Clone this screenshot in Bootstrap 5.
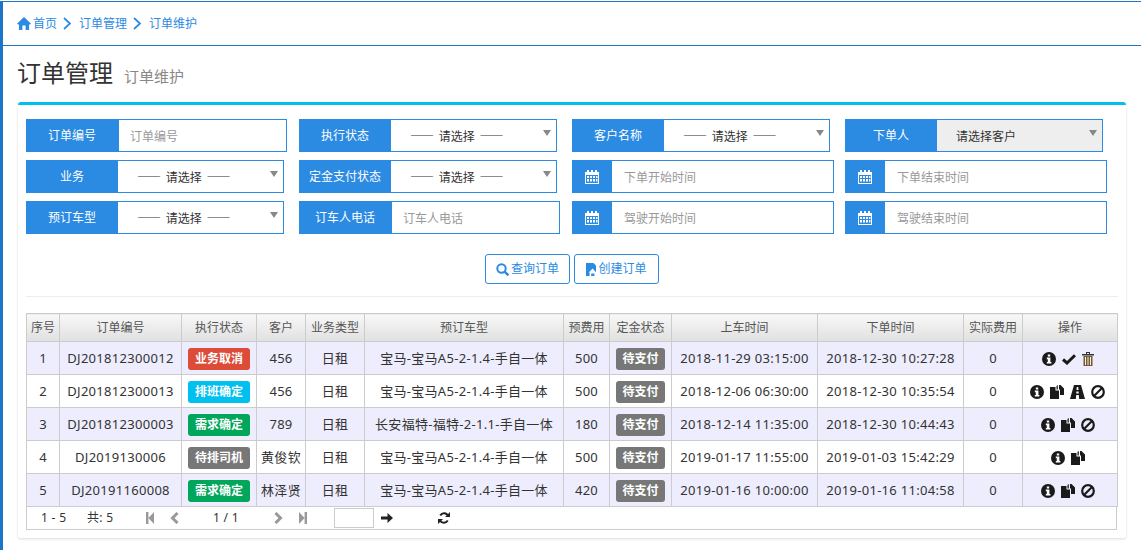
<!DOCTYPE html>
<html lang="zh">
<head>
<meta charset="utf-8">
<title>订单维护</title>
<link href="https://cdn.jsdelivr.net/npm/bootstrap@5.3.0/dist/css/bootstrap.min.css" rel="stylesheet">
<style>
html,body{height:550px;overflow:hidden}
body{font-family:"Noto Sans","Noto Sans CJK SC",sans-serif;font-size:13px;color:#333;background:#fff}
.page-wrap{height:550px;border-left:3px solid #1c75c9;border-top:1px solid #2176c7;margin-top:1px;overflow:hidden}
.crumb-bar{height:44px;border-bottom:1px solid #2176c7;padding-left:14px;display:flex;align-items:center}
.crumb-bar .breadcrumb{margin:0;font-size:12px;align-items:center;--bs-breadcrumb-item-padding-x:0;--bs-breadcrumb-divider:""}
.crumb-bar .breadcrumb-item+.breadcrumb-item::before{display:none}
.crumb-bar .breadcrumb-item{display:flex;align-items:center;color:#2b8ae2}
.crumb-bar svg{color:#2b8ae2;display:block}
.home-ic{margin-right:2px}
.chev{margin:0 8px 0 6px}
.title-line{height:56px;padding:9px 0 0 15px;display:flex;align-items:baseline}
.title-line h1{font-size:24px;font-weight:400;margin:0;color:#333;line-height:36px;margin-left:-1px}
.title-line small{font-size:15px;color:#888;margin-left:11px}
.main-box{margin:0 15px;height:436px;border-top:3px solid #00c0ef;border-radius:3px;box-shadow:0 1px 3px rgba(0,0,0,.14);padding:14px 8px 0;background:#fff}
.filter-grid{row-gap:8px;--bs-gutter-x:0}
.fld{height:33px;flex-wrap:nowrap;border:1px solid #2b8ae2;width:258px}
.fld.w-a{width:261px}
.fld.w-b{width:262px}
.fld .input-group-text{background:#2b8ae2;color:#fff;border:0;border-radius:0;width:92px;justify-content:center;font-size:12px;padding:1px 2px 0 0;flex:none}
.fld .lbl-cal{width:39px;padding:0 2px 0 0}
.fld .form-control,.fld .form-select{border:0;border-radius:0;height:31px;font-size:12px;padding:2px 12px 0;box-shadow:none;margin:0!important;color:#333;min-height:0}
.fld.w-a .form-control{padding-left:11px}
.fld .form-control::placeholder{color:#999}
.fld .form-select{padding:0 18px 0 19px;background-image:none;background-color:#fff;text-align:left;word-spacing:2px;font-family:"Noto Sans CJK SC","Noto Sans",sans-serif}
.fld.off .form-select{background-color:#eee;color:#333}
.sel-wrap{position:relative;flex:1 1 auto;min-width:0}
.sel-wrap::after{content:"";position:absolute;right:5px;top:10px;border:4px solid transparent;border-top:6px solid #888;border-bottom:0;pointer-events:none}
.act-line{margin-top:20px;height:43px;border-bottom:1px solid #eee;display:flex;justify-content:center;gap:4px;align-items:flex-start}
.btn-out{height:30px;width:85px;padding:0;border:1px solid #2b8ae2;border-radius:3px;color:#2b8ae2;background:#fff;font-size:12px;display:flex;align-items:center;justify-content:center;gap:2px}
.order-tbl{table-layout:fixed;width:1091px;margin:16px 0 0;border-collapse:collapse;--bs-table-bg:transparent}
.order-tbl th,.order-tbl td{border:1px solid #ccc;padding:0;text-align:center;vertical-align:middle;white-space:nowrap;font-weight:400;overflow:hidden}
.order-tbl th{height:28px;font-size:12px;color:#555;background:linear-gradient(#f8f8f8,#e0e0e0);padding-top:1px}
.order-tbl td{height:33px;font-size:13px;color:#333;letter-spacing:.3px;padding-top:2px}
.order-tbl tbody tr:nth-child(odd) td{background:#eeedfd}
.tag{display:inline-block;font-size:12px;font-weight:700;color:#fff;border-radius:3px;height:22px;line-height:22px;padding:0;width:62px;vertical-align:middle;letter-spacing:0}
.tag-s{width:49px}
.tag-red{background:#dd4b39}.tag-cyan{background:#00c0ef}.tag-green{background:#00a65a}.tag-grey{background:#777}
.ops{display:flex;justify-content:center;align-items:center;gap:6px;color:#1a1a1a;padding-right:5px}
.ops svg{display:block}
.pager-row{width:1091px;height:23px;border:1px solid #ccc;border-top:0;display:flex;align-items:center;font-size:12px;color:#333;letter-spacing:.3px}
.pg-a{margin-left:14px;width:46px}.pg-b{width:59px}
.pg-ic{color:#999;display:block}
.pg-num{width:26px;text-align:center;margin:0 35px 0 34px}
.pg-input{width:40px;height:20px;border:1px solid #ccc;margin-left:27px}
.pg-go{margin-left:7px;color:#222;display:block}
.pg-ref{margin-left:45px;color:#222;display:block}
col.c1{width:33px}col.c2{width:122px}col.c3{width:75px}col.c4{width:49px}col.c5{width:59px}col.c6{width:199px}col.c7{width:46px}col.c8{width:62px}col.c9{width:146px}col.c10{width:146px}col.c11{width:59px}col.c12{width:95px}
</style>
</head>
<body>
<svg width="0" height="0" class="d-block" style="height:0">
<defs>
<symbol id="i-home" viewBox="0 0 14 13"><path fill="currentColor" d="M7 0 14 6.8 13 7.6H12V13H8.6V8.6H5.4V13H2V7.6H1L0 6.8Z"/></symbol>
<symbol id="i-chev" viewBox="0 0 8 13"><path fill="none" stroke="currentColor" stroke-width="1.7" d="M1 1 7 6.5 1 12"/></symbol>
<symbol id="i-search" viewBox="0 0 13 13"><circle cx="5.5" cy="5.5" r="4.2" fill="none" stroke="currentColor" stroke-width="2"/><path stroke="currentColor" stroke-width="2.4" d="M8.6 8.6 12.4 12.4"/></symbol>
<symbol id="i-book" viewBox="0 0 10 13"><path fill="currentColor" d="M0 0H7.5L10 2.5V13H0Z"/><path fill="#fff" d="M6.6 5.5 10 9.2V13H8.4V10.5H5.2V13H3.6V9.4H2.8Z"/></symbol>
<symbol id="i-cal" viewBox="0 0 14 14"><path fill="currentColor" fill-rule="evenodd" d="M2 0H4V2H6V0H8V2H10V0H12V2H14V14H0V2H2ZM1 5V13H13V5ZM2 6H4V8H2ZM5 6H7V8H5ZM8 6H10V8H8ZM11 6H12.5V8H11ZM2 9H4V11.5H2ZM5 9H7V11.5H5ZM8 9H10V11.5H8ZM11 9H12.5V11.5H11Z"/></symbol>
<symbol id="i-info" viewBox="0 0 14 14"><circle cx="7" cy="7" r="7" fill="currentColor"/><path fill="#fff" d="M5.8 2.4H8.2V4.6H5.8ZM4.8 5.6H8.4V10H9.4V11.6H4.8V10H5.8V7.2H4.8Z"/></symbol>
<symbol id="i-ok" viewBox="0 0 14 11"><path fill="none" stroke="currentColor" stroke-width="3" d="M1 5.5 5 9 13 1.2"/></symbol>
<symbol id="i-trash" viewBox="0 0 12 14"><path fill="#7a5a2a" d="M1.5 4H10.5V14H1.5ZM3 5V13H4V5ZM5.5 5V13H6.5V5ZM8 5V13H9V5Z" fill-rule="evenodd"/><path fill="#333" d="M0 2H4V0H8V2H12V3.4H0ZM5 1V2H7V1Z" fill-rule="evenodd"/></symbol>
<symbol id="i-paste" viewBox="0 0 14 14"><path fill="currentColor" d="M0 2H5.5V5.5H9V14H0Z"/><path fill="currentColor" d="M6.5 1 7.8 0V4.5H6.5ZM9 0H10.5V0L14 3.5V10H10V4.5H9Z"/></symbol>
<symbol id="i-road" viewBox="0 0 15 14"><path fill="currentColor" fill-rule="evenodd" d="M4 0H11L15 14H9.2L8.8 10H6.2L5.8 14H0ZM6.8 2 6.5 5H8.5L8.2 2ZM6.4 6.5 6.3 8.6H8.7L8.6 6.5Z"/></symbol>
<symbol id="i-ban" viewBox="0 0 14 14"><circle cx="7" cy="7" r="5.8" fill="none" stroke="currentColor" stroke-width="2.2"/><path stroke="currentColor" stroke-width="2.2" d="M3 11 11 3"/></symbol>
<symbol id="i-first" viewBox="0 0 8 12"><path fill="currentColor" d="M0 0H2.4V12H0ZM8 0V12L2.4 6Z"/></symbol>
<symbol id="i-last" viewBox="0 0 8 12"><path fill="currentColor" d="M8 0H5.6V12H8ZM0 0V12L5.6 6Z"/></symbol>
<symbol id="i-prev" viewBox="0 0 9 12"><path fill="none" stroke="currentColor" stroke-width="3" d="M7.5 1 2.5 6 7.5 11"/></symbol>
<symbol id="i-next" viewBox="0 0 9 12"><path fill="none" stroke="currentColor" stroke-width="3" d="M1.5 1 6.5 6 1.5 11"/></symbol>
<symbol id="i-arrow" viewBox="0 0 12 10"><path fill="currentColor" d="M0 3.5H6.5V0L12 5 6.5 10V6.5H0Z"/></symbol>
<symbol id="i-ref" viewBox="0 0 12 12"><path fill="none" stroke="currentColor" stroke-width="1.9" d="M10.2 4A4.5 4.5 0 0 0 2.2 3.4M1.8 8A4.5 4.5 0 0 0 9.8 8.6"/><path fill="currentColor" d="M12 0V5H7ZM0 12V7H5Z"/></symbol>
</defs>
</svg>
<div class="page-wrap">
  <nav class="crumb-bar">
    <ol class="breadcrumb">
      <li class="breadcrumb-item"><svg width="14" height="13" class="home-ic"><use href="#i-home"/></svg>首页<svg class="chev" width="8" height="13"><use href="#i-chev"/></svg></li>
      <li class="breadcrumb-item">订单管理<svg class="chev" width="8" height="13"><use href="#i-chev"/></svg></li>
      <li class="breadcrumb-item active">订单维护</li>
    </ol>
  </nav>
  <div class="title-line"><h1>订单管理</h1><small>订单维护</small></div>
  <section class="main-box">
    <div class="row filter-grid">
      <div class="col-3"><div class="input-group fld w-a"><span class="input-group-text">订单编号</span><input class="form-control" placeholder="订单编号"></div></div>
      <div class="col-3"><div class="input-group fld"><span class="input-group-text">执行状态</span><div class="sel-wrap"><select class="form-select"><option>—— 请选择 ——</option></select></div></div></div>
      <div class="col-3"><div class="input-group fld"><span class="input-group-text">客户名称</span><div class="sel-wrap"><select class="form-select"><option>—— 请选择 ——</option></select></div></div></div>
      <div class="col-3"><div class="input-group fld off"><span class="input-group-text">下单人</span><div class="sel-wrap"><select class="form-select"><option>请选择客户</option></select></div></div></div>

      <div class="col-3"><div class="input-group fld"><span class="input-group-text">业务</span><div class="sel-wrap"><select class="form-select"><option>—— 请选择 ——</option></select></div></div></div>
      <div class="col-3"><div class="input-group fld"><span class="input-group-text">定金支付状态</span><div class="sel-wrap"><select class="form-select"><option>—— 请选择 ——</option></select></div></div></div>
      <div class="col-3"><div class="input-group fld w-b"><span class="input-group-text lbl-cal"><svg width="14" height="14"><use href="#i-cal"/></svg></span><input class="form-control" placeholder="下单开始时间"></div></div>
      <div class="col-3"><div class="input-group fld w-b"><span class="input-group-text lbl-cal"><svg width="14" height="14"><use href="#i-cal"/></svg></span><input class="form-control" placeholder="下单结束时间"></div></div>

      <div class="col-3"><div class="input-group fld"><span class="input-group-text">预订车型</span><div class="sel-wrap"><select class="form-select"><option>—— 请选择 ——</option></select></div></div></div>
      <div class="col-3"><div class="input-group fld w-a"><span class="input-group-text">订车人电话</span><input class="form-control" placeholder="订车人电话"></div></div>
      <div class="col-3"><div class="input-group fld w-b"><span class="input-group-text lbl-cal"><svg width="14" height="14"><use href="#i-cal"/></svg></span><input class="form-control" placeholder="驾驶开始时间"></div></div>
      <div class="col-3"><div class="input-group fld w-b"><span class="input-group-text lbl-cal"><svg width="14" height="14"><use href="#i-cal"/></svg></span><input class="form-control" placeholder="驾驶结束时间"></div></div>
    </div>
    <div class="act-line">
      <button class="btn btn-out" type="button"><svg width="13" height="13"><use href="#i-search"/></svg>查询订单</button>
      <button class="btn btn-out" type="button"><svg width="10" height="13"><use href="#i-book"/></svg>创建订单</button>
    </div>
    <table class="table order-tbl">
      <colgroup><col class="c1"><col class="c2"><col class="c3"><col class="c4"><col class="c5"><col class="c6"><col class="c7"><col class="c8"><col class="c9"><col class="c10"><col class="c11"><col class="c12"></colgroup>
      <thead><tr><th>序号</th><th>订单编号</th><th>执行状态</th><th>客户</th><th>业务类型</th><th>预订车型</th><th>预费用</th><th>定金状态</th><th>上车时间</th><th>下单时间</th><th>实际费用</th><th>操作</th></tr></thead>
      <tbody>
        <tr><td>1</td><td>DJ201812300012</td><td><span class="tag tag-red">业务取消</span></td><td>456</td><td>日租</td><td>宝马-宝马A5-2-1.4-手自一体</td><td>500</td><td><span class="tag tag-s tag-grey">待支付</span></td><td>2018-11-29 03:15:00</td><td>2018-12-30 10:27:28</td><td>0</td><td><div class="ops"><svg width="14" height="14"><use href="#i-info"/></svg><svg width="14" height="11"><use href="#i-ok"/></svg><svg width="12" height="14"><use href="#i-trash"/></svg></div></td></tr>
        <tr><td>2</td><td>DJ201812300013</td><td><span class="tag tag-cyan">排班确定</span></td><td>456</td><td>日租</td><td>宝马-宝马A5-2-1.4-手自一体</td><td>500</td><td><span class="tag tag-s tag-grey">待支付</span></td><td>2018-12-06 06:30:00</td><td>2018-12-30 10:35:54</td><td>0</td><td><div class="ops"><svg width="14" height="14"><use href="#i-info"/></svg><svg width="14" height="14"><use href="#i-paste"/></svg><svg width="15" height="14"><use href="#i-road"/></svg><svg width="14" height="14"><use href="#i-ban"/></svg></div></td></tr>
        <tr><td>3</td><td>DJ201812300003</td><td><span class="tag tag-green">需求确定</span></td><td>789</td><td>日租</td><td>长安福特-福特-2-1.1-手自一体</td><td>180</td><td><span class="tag tag-s tag-grey">待支付</span></td><td>2018-12-14 11:35:00</td><td>2018-12-30 10:44:43</td><td>0</td><td><div class="ops"><svg width="14" height="14"><use href="#i-info"/></svg><svg width="14" height="14"><use href="#i-paste"/></svg><svg width="14" height="14"><use href="#i-ban"/></svg></div></td></tr>
        <tr><td>4</td><td>DJ2019130006</td><td><span class="tag tag-grey">待排司机</span></td><td>黄俊钦</td><td>日租</td><td>宝马-宝马A5-2-1.4-手自一体</td><td>500</td><td><span class="tag tag-s tag-grey">待支付</span></td><td>2019-01-17 11:55:00</td><td>2019-01-03 15:42:29</td><td>0</td><td><div class="ops"><svg width="14" height="14"><use href="#i-info"/></svg><svg width="14" height="14"><use href="#i-paste"/></svg></div></td></tr>
        <tr><td>5</td><td>DJ20191160008</td><td><span class="tag tag-green">需求确定</span></td><td>林泽贤</td><td>日租</td><td>宝马-宝马A5-2-1.4-手自一体</td><td>420</td><td><span class="tag tag-s tag-grey">待支付</span></td><td>2019-01-16 10:00:00</td><td>2019-01-16 11:04:58</td><td>0</td><td><div class="ops"><svg width="14" height="14"><use href="#i-info"/></svg><svg width="14" height="14"><use href="#i-paste"/></svg><svg width="14" height="14"><use href="#i-ban"/></svg></div></td></tr>
      </tbody>
    </table>
    <div class="pager-row">
      <span class="pg-a">1 - 5</span><span class="pg-b">共: 5</span>
      <svg class="pg-ic" width="8" height="12"><use href="#i-first"/></svg>
      <svg class="pg-ic ms-3" width="9" height="12"><use href="#i-prev"/></svg>
      <span class="pg-num">1 / 1</span>
      <svg class="pg-ic" width="9" height="12"><use href="#i-next"/></svg>
      <svg class="pg-ic ms-3" width="8" height="12"><use href="#i-last"/></svg>
      <span class="pg-input"></span>
      <svg class="pg-go" width="12" height="10"><use href="#i-arrow"/></svg>
      <svg class="pg-ref" width="12" height="12"><use href="#i-ref"/></svg>
    </div>
  </section>
</div>
<script src="https://cdn.jsdelivr.net/npm/bootstrap@5.3.0/dist/js/bootstrap.bundle.min.js"></script>
</body>
</html>
